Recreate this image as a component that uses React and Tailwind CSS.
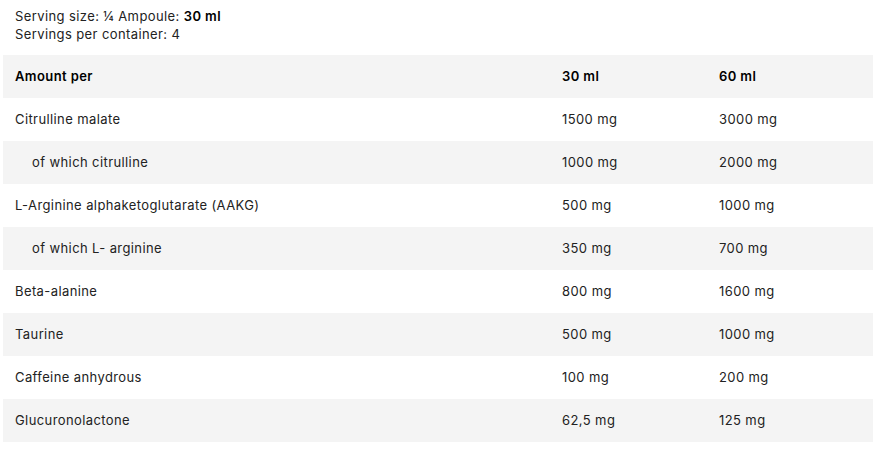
import React from 'react';

const rows = [
  { name: 'Citrulline malate', a: '1500 mg', b: '3000 mg' },
  { name: 'of which citrulline', a: '1000 mg', b: '2000 mg', sub: true },
  { name: 'L-Arginine alphaketoglutarate (AAKG)', a: '500 mg', b: '1000 mg' },
  { name: 'of which L- arginine', a: '350 mg', b: '700 mg', sub: true },
  { name: 'Beta-alanine', a: '800 mg', b: '1600 mg' },
  { name: 'Taurine', a: '500 mg', b: '1000 mg' },
  { name: 'Caffeine anhydrous', a: '100 mg', b: '200 mg' },
  { name: 'Glucuronolactone', a: '62,5 mg', b: '125 mg' },
];

const App = () => {
  return (
    <div className="w-[894px] h-[459px] bg-white text-[#222] text-[13px] tracking-[0.4px] font-['Inter',sans-serif]">
      <div className="pl-[15px] pt-[7px] leading-[18px]">
        <p>
          Serving size: ¼ Ampoule: <span className="font-semibold text-black">30 ml</span>
        </p>
        <p>Servings per container: 4</p>
      </div>

      <div className="ml-[3px] mt-[12px] w-[870px]">
        {/* en-tête */}
        <div className="grid grid-cols-[547px_157px_166px] h-[43px] pt-[1px] items-center bg-[#f4f4f4] font-semibold text-black">
          <div className="pl-[12px]">Amount per</div>
          <div className="pl-[12px]">30 ml</div>
          <div className="pl-[12px]">60 ml</div>
        </div>

        {rows.map((row, index) => (
          <div
            key={index}
            className={`grid grid-cols-[547px_157px_166px] h-[43px] pt-[1px] items-center ${index % 2 === 1 ? 'bg-[#f4f4f4]' : 'bg-white'}`}
          >
            <div className={row.sub ? 'pl-[29px]' : 'pl-[12px]'}>{row.name}</div>
            <div className="pl-[12px]">{row.a}</div>
            <div className="pl-[12px]">{row.b}</div>
          </div>
        ))}
      </div>
    </div>
  );
};

export default App;
